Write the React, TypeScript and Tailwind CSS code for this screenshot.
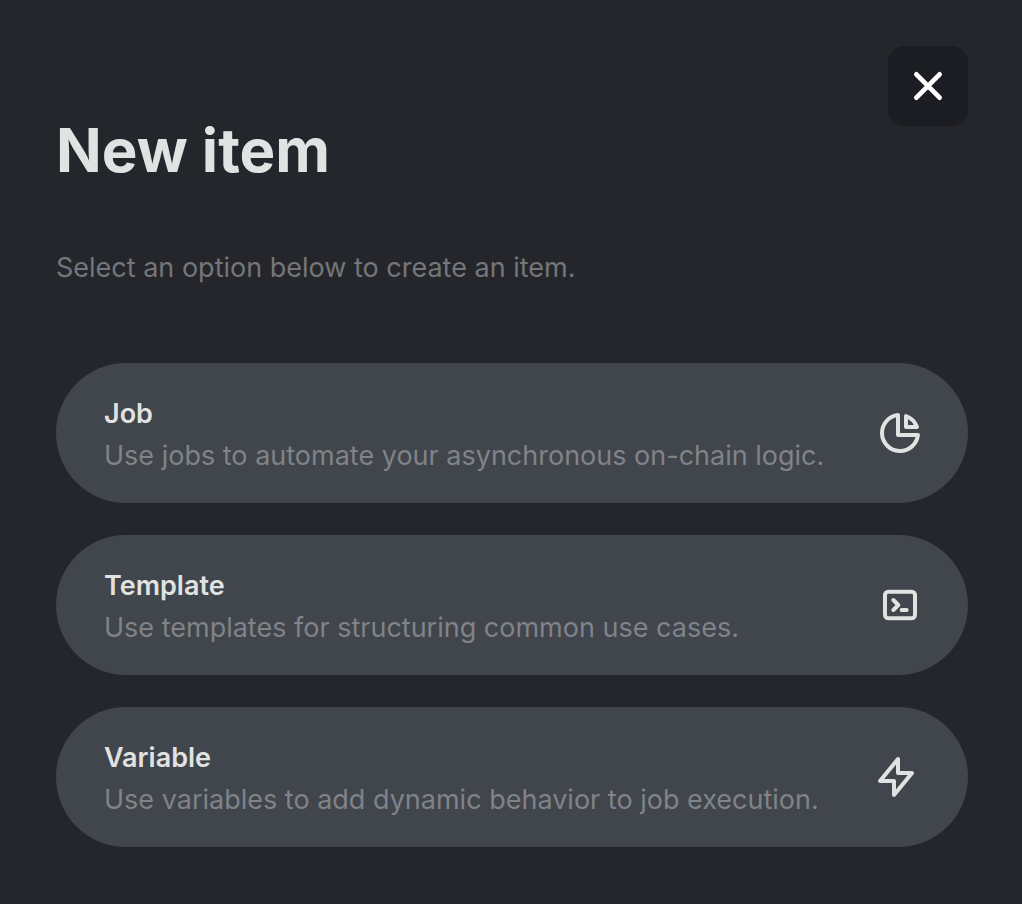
import type { ReactNode } from 'react';

type Option = { title: string; text: string; icon: ReactNode };

const options: Option[] = [
  {
    title: 'Job',
    text: 'Use jobs to automate your asynchronous on-chain logic.',
    icon: (
      <svg viewBox="2 2 20 20" className="size-10 shrink-0" fill="none" stroke="currentColor" strokeWidth="2" strokeLinecap="round" strokeLinejoin="round" aria-hidden="true">
        <path d="M11 3.055A9.001 9.001 0 1020.945 13H11V3.055z" />
        <path d="M20.488 9H15V3.512A9.025 9.025 0 0120.488 9z" />
      </svg>
    ),
  },
  {
    title: 'Template',
    text: 'Use templates for structuring common use cases.',
    icon: (
      <svg viewBox="0 0 24 24" className="size-10 shrink-0" fill="none" stroke="currentColor" strokeWidth="2.4" strokeLinecap="round" strokeLinejoin="round" aria-hidden="true">
        <path d="M8 9l3 3-3 3m5 0h3M5 20h14a2 2 0 002-2V6a2 2 0 00-2-2H5a2 2 0 00-2 2v12a2 2 0 002 2z" />
      </svg>
    ),
  },
  {
    title: 'Variable',
    text: 'Use variables to add dynamic behavior to job execution.',
    icon: (
      <svg viewBox="0 0 24 24" className="size-12 shrink-0" fill="none" stroke="currentColor" strokeWidth="2" strokeLinecap="round" strokeLinejoin="round" aria-hidden="true">
        <path d="M13 10V3L4 14h7v7l9-11h-7z" />
      </svg>
    ),
  },
];

export default function App() {
  return (
    <main className="min-h-screen bg-[#24262b] pt-[46px] pr-[54px] pb-14 pl-14 font-['Inter',sans-serif] text-[#e0e3e1]">
      <div className="flex justify-end">
        <button type="button" aria-label="Close" className="flex size-20 items-center justify-center rounded-2xl bg-[#1c1d22] text-white">
          <svg viewBox="0 0 24 24" className="size-12" fill="none" stroke="currentColor" strokeWidth="2.4" strokeLinecap="round" aria-hidden="true">
            <path d="M6.2 17.8L17.8 6.2M6.2 6.2l11.6 11.6" />
          </svg>
        </button>
      </div>
      <h1 className="text-[60px] leading-12 font-bold">New item</h1>
      <p className="mt-[74px] text-[27px] leading-10 text-[#74767a]">Select an option below to create an item.</p>
      <div className="mt-[75px] flex flex-col gap-8">
        {options.map((o) => (
          <button key={o.title} type="button" className="flex h-[140px] items-center justify-between rounded-full bg-[#41454c] px-12 text-left">
            <span className="flex flex-col pt-1 text-[27px] leading-[42px]">
              <span className="font-semibold">{o.title}</span>
              <span className="text-[#808388]">{o.text}</span>
            </span>
            {o.icon}
          </button>
        ))}
      </div>
    </main>
  );
}
